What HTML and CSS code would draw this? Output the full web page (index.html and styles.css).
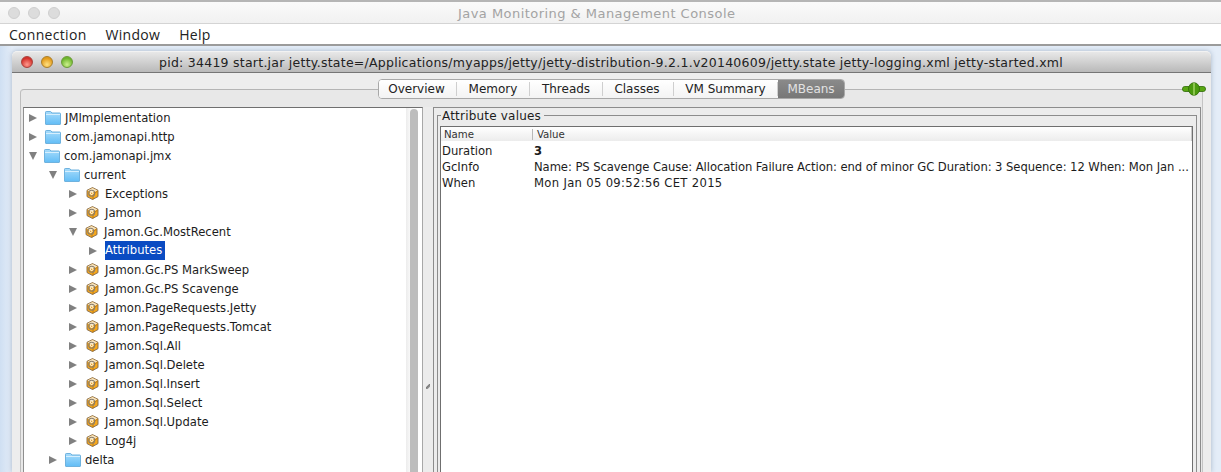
FILE: index.html
```html
<!DOCTYPE html>
<html lang="en">
<head>
<meta charset="utf-8">
<title>Java Monitoring &amp; Management Console</title>
<link rel="stylesheet" href="styles.css">
</head>
<body>
<svg class="defs" width="0" height="0" aria-hidden="true">
  <defs>
    <linearGradient id="fg" x1="0" y1="0" x2="0" y2="1">
      <stop offset="0" stop-color="#a8dcfb"/>
      <stop offset="1" stop-color="#62bdf6"/>
    </linearGradient>
    <symbol id="folder" viewBox="0 0 16 14">
      <path d="M.5 13V1.200C.5.800.8.500 1.200.500h4.200c.4 0 .6.2.8.500l.6 1h8c.4 0 .7.3.7.7V13c0 .3-.2.500-.5.500H1c-.3 0-.5-.2-.5-.5z" fill="url(#fg)" stroke="#6fb2de"/>
      <path d="M1 3.500h14" stroke="#d6effe"/>
    </symbol>
    <symbol id="bean" viewBox="0 0 13 13">
      <path d="M6.500.6 12 3.300v6.300l-5.500 2.900L1 9.600V3.300z" fill="#f7a81c" stroke="#80684a" stroke-width=".9"/>
      <path d="M1.500 3.400 6.500 1l5 2.400-3 1.600h-4z" fill="#f6e4c2"/>
      <path d="M7 7.500v5M7.500 7.300 11.600 4" stroke="#b06f10" stroke-width=".8"/>
      <circle cx="5.700" cy="6.300" r="3" fill="none" stroke="#8a7f6c" stroke-width="1.100"/>
      <circle cx="5.700" cy="6.300" r="1.700" fill="#fdf5e2"/>
      <circle cx="5.700" cy="6.300" r=".8" fill="#e5950f"/>
    </symbol>
  </defs>
</svg>

<header class="os-title">
  <div class="lights">
    <span class="dot off"></span><span class="dot off"></span><span class="dot off"></span>
  </div>
  <span class="os-title-text">Java Monitoring &amp; Management Console</span>
</header>

<nav class="menubar">
  <span>Connection</span><span>Window</span><span>Help</span>
</nav>

<main class="desktop">
  <section class="window">
    <div class="win-title">
      <div class="lights inner">
        <span class="dot red"></span><span class="dot amber"></span><span class="dot green"></span>
      </div>
      <span class="win-title-text">pid: 34419 start.jar jetty.state=/Applications/myapps/jetty/jetty-distribution-9.2.1.v20140609/jetty.state jetty-logging.xml jetty-started.xml</span>
    </div>

    <div class="tabstrip">
      <div class="tabs">
        <span class="tab t1">Overview</span>
        <span class="tab t2">Memory</span>
        <span class="tab t3">Threads</span>
        <span class="tab t4">Classes</span>
        <span class="tab t5">VM Summary</span>
        <span class="tab active">MBeans</span>
      </div>
      <svg class="plug" width="24" height="14" viewBox="0 0 24 14" aria-hidden="true">
        <path d="M.5 7c0-1.700 1-2.500 2.200-2.500H9v5H2.700C1.500 9.500.5 8.700.5 7z" fill="#58a612" stroke="#2f6a08" stroke-width=".8"/>
        <path d="M23.500 7c0-1.700-1-2.500-2.200-2.500H15v5h6.300c1.200 0 2.200-.8 2.200-2.500z" fill="#58a612" stroke="#2f6a08" stroke-width=".8"/>
        <ellipse cx="12" cy="7" rx="5.500" ry="6.300" fill="#4b9a0e" stroke="#2f6a08" stroke-width=".8"/>
        <path d="M12 .8v12.400" stroke="#b7e07c" stroke-width="1.200"/>
      </svg>
    </div>

    <div class="panel">
      <div class="tree-pane">
        <ul class="tree">
          <li class="row l0"><i class="arrow"></i><svg class="folder"><use href="#folder"/></svg><span class="label">JMImplementation</span></li>
          <li class="row l0"><i class="arrow"></i><svg class="folder"><use href="#folder"/></svg><span class="label">com.jamonapi.http</span></li>
          <li class="row l0"><i class="arrow open"></i><svg class="folder"><use href="#folder"/></svg><span class="label">com.jamonapi.jmx</span></li>
          <li class="row l1"><i class="arrow open"></i><svg class="folder"><use href="#folder"/></svg><span class="label">current</span></li>
          <li class="row l2"><i class="arrow"></i><svg class="bean"><use href="#bean"/></svg><span class="label">Exceptions</span></li>
          <li class="row l2"><i class="arrow"></i><svg class="bean"><use href="#bean"/></svg><span class="label">Jamon</span></li>
          <li class="row l2"><i class="arrow open"></i><svg class="bean"><use href="#bean"/></svg><span class="label">Jamon.Gc.MostRecent</span></li>
          <li class="row l3"><i class="arrow"></i><span class="label selected">Attributes</span></li>
          <li class="row l2"><i class="arrow"></i><svg class="bean"><use href="#bean"/></svg><span class="label">Jamon.Gc.PS MarkSweep</span></li>
          <li class="row l2"><i class="arrow"></i><svg class="bean"><use href="#bean"/></svg><span class="label">Jamon.Gc.PS Scavenge</span></li>
          <li class="row l2"><i class="arrow"></i><svg class="bean"><use href="#bean"/></svg><span class="label">Jamon.PageRequests.Jetty</span></li>
          <li class="row l2"><i class="arrow"></i><svg class="bean"><use href="#bean"/></svg><span class="label">Jamon.PageRequests.Tomcat</span></li>
          <li class="row l2"><i class="arrow"></i><svg class="bean"><use href="#bean"/></svg><span class="label">Jamon.Sql.All</span></li>
          <li class="row l2"><i class="arrow"></i><svg class="bean"><use href="#bean"/></svg><span class="label">Jamon.Sql.Delete</span></li>
          <li class="row l2"><i class="arrow"></i><svg class="bean"><use href="#bean"/></svg><span class="label">Jamon.Sql.Insert</span></li>
          <li class="row l2"><i class="arrow"></i><svg class="bean"><use href="#bean"/></svg><span class="label">Jamon.Sql.Select</span></li>
          <li class="row l2"><i class="arrow"></i><svg class="bean"><use href="#bean"/></svg><span class="label">Jamon.Sql.Update</span></li>
          <li class="row l2"><i class="arrow"></i><svg class="bean"><use href="#bean"/></svg><span class="label">Log4j</span></li>
          <li class="row l1"><i class="arrow"></i><svg class="folder"><use href="#folder"/></svg><span class="label">delta</span></li>
          <li class="row l0"><i class="arrow"></i><svg class="folder"><use href="#folder"/></svg></li>
        </ul>
        <div class="scrollbar"><div class="thumb"></div></div>
      </div>

      <div class="splitter"><i class="grip"></i></div>

      <div class="attr-pane">
        <div class="attr-group">
          <div class="legend"><span>Attribute values</span></div>
          <div class="table">
            <div class="thead"><span class="c-name">Name</span><span class="c-value">Value</span></div>
            <div class="tr"><span class="c-name">Duration</span><span class="c-value strong">3</span></div>
            <div class="tr"><span class="c-name">GcInfo</span><span class="c-value">Name: PS Scavenge Cause: Allocation Failure Action: end of minor GC Duration: 3 Sequence: 12 When: Mon Jan ...</span></div>
            <div class="tr"><span class="c-name">When</span><span class="c-value date">Mon Jan 05 09:52:56 CET 2015</span></div>
          </div>
        </div>
      </div>
    </div>
  </section>
</main>
</body>
</html>
```

FILE: styles.css
```css
* { box-sizing: border-box; }
html, body { height: 100%; }
body {
  margin: 0;
  height: 472px;
  overflow: hidden;
  display: flex;
  flex-direction: column;
  background: #dce7f4;
  font-family: "DejaVu Sans", "Liberation Sans", sans-serif;
  font-size: 11.600px;
  color: #1c1c1c;
}
.defs { position: absolute; }

.os-title {
  height: 24px;
  flex: none;
  display: flex;
  align-items: center;
  background: linear-gradient(#fafafa, #f1f1f1);
  border-top: 2px solid #b5b5b5;
  border-bottom: 1px solid #d4d4d4;
  padding-left: 8px;
}
.lights { display: flex; gap: 8px; flex: none; }
.dot {
  width: 12px;
  height: 12px;
  border-radius: 50%;
  display: block;
}
.dot.off { background: #dcdcdc; border: 1px solid #cfcfcf; }
.os-title-text {
  margin-left: 398px;
  padding-top: 1px;
  font-size: 13px;
  letter-spacing: .46px;
  color: #a3a3a3;
  white-space: nowrap;
}

.menubar {
  height: 22px;
  flex: none;
  display: flex;
  align-items: center;
  gap: 19px;
  padding-left: 9px;
  background: #fff;
  border-bottom: 2px solid #9b9b9b;
  font-family: "Open Sans", "Liberation Sans", sans-serif;
  font-size: 14px;
  letter-spacing: .3px;
  color: #222;
}

.desktop {
  flex: 1;
  min-height: 0;
  overflow: hidden;
  padding: 5px 10px 0 12px;
  background: linear-gradient(90deg, #cfdff2, #e4edf8 12px);
}
.window {
  height: 100%;
  overflow: hidden;
  background: #ededed;
  border-radius: 5px 5px 0 0;
  box-shadow: 0 0 5px rgba(90, 110, 140, .45);
}

.win-title {
  height: 22px;
  display: flex;
  align-items: center;
  padding-left: 9px;
  background: linear-gradient(#e8e8e8, #b9b9b9);
  border-top: 1px solid #f2f2f2;
  border-bottom: 1px solid #757575;
  border-radius: 5px 5px 0 0;
}
.lights.inner { gap: 8px; }
.dot.red { background: radial-gradient(circle at 50% 75%, #ff9a8e, #d3302a 70%); border: 1px solid #a8413c; }
.dot.amber { background: radial-gradient(circle at 50% 75%, #ffe080, #e29a1a 70%); border: 1px solid #a97f2b; }
.dot.green { background: radial-gradient(circle at 50% 75%, #cdf08c, #6db52c 70%); border: 1px solid #6b9a3a; }
.win-title-text {
  margin-left: 86px;
  white-space: nowrap;
  font-size: 12.500px;
  letter-spacing: .25px;
  color: #222;
}

.tabstrip {
  position: relative;
  z-index: 1;
  height: 20px;
  margin: 6px 0 -10px 8px;
  padding-right: 5px;
  display: flex;
  align-items: center;
  font-size: 12px;
}
.tabs {
  margin-left: 358px;
  height: 20px;
  display: flex;
  background: #fff;
  border: 1px solid #a8a8a8;
  border-radius: 4px;
  overflow: hidden;
}
.tab {
  display: flex;
  align-items: center;
  justify-content: center;
  border-right: 1px solid;
  border-image: linear-gradient(transparent 15%, #cfcfcf 15%, #cfcfcf 85%, transparent 85%) 1;
  color: #222;
  background: linear-gradient(#fff, #f3f3f3);
}
.t1 { width: 78px; padding-right: 2px; }
.t2 { width: 73px; }
.t3 { width: 73px; }
.t4 { width: 71px; padding-right: 2px; }
.t5 { width: 104px; }
.tab.active {
  width: 66px;
  border-right: 0;
  color: #e2e2e2;
  background: linear-gradient(#8a8a8a, #777);
}
.plug { margin-left: auto; flex: none; }

.panel {
  height: 400px;
  margin: 0 8px;
  padding: 17px 1px 0 2px;
  display: flex;
  border-top: 1px solid #b4b4b4;
  border-left: 1px solid #bdbdbd;
  border-right: 1px solid #c4c4c4;
  border-radius: 4px 4px 0 0;
  background: #e8e8e8;
}

.tree-pane {
  width: 400px;
  flex: none;
  display: flex;
  background: #fff;
  border-top: 1px solid #6f6f6f;
  border-left: 1px solid #8f8f8f;
  border-right: 1px solid #a8a8a8;
}
.tree {
  list-style: none;
  margin: 0;
  padding: 0;
  flex: 1;
  min-width: 0;
}
.row {
  height: 19px;
  display: flex;
  align-items: center;
  white-space: nowrap;
}
.l0 { padding-left: 5px; }
.l1 { padding-left: 25px; }
.l2 { padding-left: 45px; }
.l3 { padding-left: 65px; }
.arrow {
  width: 0;
  height: 0;
  flex: none;
  border-style: solid;
  border-width: 4.500px 0 4.500px 8px;
  border-color: transparent transparent transparent #808080;
}
.arrow.open {
  border-width: 8px 4.500px 0;
  border-color: #808080 transparent transparent;
  margin-left: -.500px;
  margin-right: -.500px;
}
.folder { width: 16px; height: 14px; margin-left: 8px; flex: none; }
.bean { width: 13px; height: 13px; margin-left: 9px; flex: none; }
.label { color: #1c1c1c; }
.folder + .label { margin-left: 4px; }
.bean + .label { margin-left: 6px; }
.l3 .label { margin-left: 8px; }
.selected {
  height: 19px;
  line-height: 19px;
  padding-right: 3px;
  background: #0a4bc2;
  color: #fff !important;
}

.scrollbar {
  width: 16px;
  flex: none;
  padding: 1px 4px 0;
  background: linear-gradient(90deg, #ececec, #f8f8f8 4px, #fff 12px);
}
.thumb { height: 100%; background: #bdbdbd; border-radius: 4px 4px 0 0; }

.splitter {
  width: 10px;
  flex: none;
  display: flex;
  justify-content: center;
  align-items: flex-start;
  padding-top: 277px;
  background: #ececec;
}
.grip {
  width: 4px;
  height: 5px;
  background: linear-gradient(135deg, transparent 30%, #777 40%, #999 70%, transparent 80%);
}

.attr-pane {
  flex: 1;
  min-width: 0;
  padding: 7px 3px 0;
  border: 1px solid #8c8c8c;
  border-bottom: 0;
  background: #ececec;
}
.attr-group {
  position: relative;
  height: 100%;
  padding: 10px 3px 0 2px;
  border: 1px solid #8c8c8c;
  border-bottom: 0;
}
.legend {
  position: absolute;
  top: -8px;
  left: 3px;
  line-height: 16px;
  font-size: 12px;
  letter-spacing: .2px;
}
.legend span { background: #ececec; padding: 0 3px 0 1px; display: block; }
.table {
  height: 100%;
  background: #fff;
  border: 1px solid #6f6f6f;
  border-bottom: 0;
}
.thead {
  height: 14px;
  display: flex;
  align-items: center;
  background: linear-gradient(#fff, #ececec);
  border-right: 1px solid #c8c8c8;
  font-size: 10.200px;
  color: #333;
}
.thead .c-name { padding-left: 3px; }
.thead .c-value { border-left: 1px solid #b8b8b8; padding-left: 4px; margin-left: -2px; }
.tr {
  height: 16px;
  display: flex;
  align-items: center;
  white-space: nowrap;
}
.tr:nth-child(2) { margin-top: 2px; }
.c-name { width: 93px; flex: none; padding-left: 1px; }
.c-value { flex: 1; min-width: 0; letter-spacing: -.07px; }
.c-value.date { letter-spacing: .32px; }
.strong { font-weight: 700; }
```
